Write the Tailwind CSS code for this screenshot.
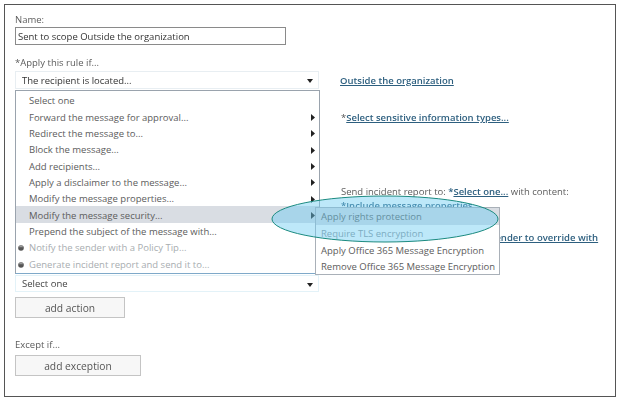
<!DOCTYPE html>
<html>
<head>
<meta charset="utf-8">
<script src="https://cdn.jsdelivr.net/npm/@tailwindcss/browser@4"></script>
</head>
<body class="bg-white w-[621px] h-[404px] overflow-hidden font-['Open_Sans','Noto_Sans',sans-serif] text-[9.5px] text-[#5c5c5c]">
<div class="relative ml-[4px] mt-[4px] w-[612px] h-[393px] border border-[#555]">
  <div class="blur-[0.4px] h-full relative">
  <div class="flex h-full">
    <!-- left column -->
    <div class="w-[315px] pl-[10px] flex flex-col shrink-0">
      <div class="mt-[8px] h-[12px] leading-[14px]">Name:</div>
      <div class="mt-[2px] w-[271px] h-[18px] border border-[#8a8a8a] px-[2px] leading-[18px] text-[#333]">Sent to scope Outside the organization</div>
      <div class="mt-[11px] h-[12px] leading-[14px]">*Apply this rule if...</div>
      <div class="mt-[3px] w-[304px] h-[18px] border border-[#e8eef2] pl-[6px] pr-[4px] pt-[2px] flex items-center justify-between text-[#333]">
        <span>The recipient is located...</span>
        <svg width="7" height="4" viewBox="0 0 7 4"><path d="M0 0h6L3 4z" fill="#222"/></svg>
      </div>
      <div class="h-[186px]"></div>
      <div class="w-[304px] h-[17px] border border-[#e3f2f8] pl-[6px] pr-[4px] pt-[2px] flex items-center justify-between text-[#444]">
        <span>Select one</span>
        <svg width="7" height="4" viewBox="0 0 7 4"><path d="M0 0h6L3 4z" fill="#222"/></svg>
      </div>
      <button class="mt-[5px] w-[110px] h-[21px] border border-[#c4c4c4] bg-[#f7f7f7] pt-[1px] text-[10.25px] text-[#555] leading-[19px] text-center">add action</button>
      <div class="mt-[20px] h-[12px] leading-[14px]">Except if...</div>
      <button class="mt-[5px] w-[126px] h-[21px] border border-[#c4c4c4] bg-[#f7f7f7] pt-[1px] text-[10.25px] text-[#555] leading-[19px] text-center">add exception</button>
    </div>
    <!-- right column -->
    <div class="flex-1 flex flex-col pl-[20px]">
      <a class="mt-[69px] h-[14px] leading-[14px] font-semibold underline text-[#2d5f7f]">Outside the organization</a>
      <div class="mt-[23px] h-[14px] leading-[14px] pl-[1px] font-semibold text-[#2d5f7f]"><span class="font-normal text-[#555]">*</span><span class="underline">Select sensitive information types...</span></div>
      <div class="mt-[60px] h-[14px] leading-[14px] pl-[1px]">Send incident report to: <span class="font-semibold text-[#2d5f7f]">*<span class="underline">Select one...</span></span> with content:</div>
      <div class="h-[14px] leading-[14px] pl-[1px] font-semibold text-[#2d5f7f]">*<span class="underline">Include message properties</span></div>
      <div class="mt-[18px] h-[14px] leading-[14px] pl-[3px] font-semibold text-[#2d5f7f] whitespace-nowrap"><span class="underline">Notify the sender, but allow the sender to override with</span></div>
    </div>
  </div>

  <!-- dropdown menu -->
  <div class="absolute left-[10px] top-[85px] w-[305px] h-[184px] border border-[#9aa3ad] border-b-[#7fa9c9] bg-white flex flex-col py-[1px] text-[#5c5c5c]">
    <div class="h-[16.5px] leading-[18.5px] pl-[13px]">Select one</div>
    <div class="h-[16.5px] pt-[2px] pl-[13px] pr-[4px] flex items-center justify-between"><span>Forward the message for approval...</span><svg width="4" height="7" viewBox="0 0 4 7"><path d="M0 0l4 3.5L0 7z" fill="#222"/></svg></div>
    <div class="h-[16.5px] pt-[2px] pl-[13px] pr-[4px] flex items-center justify-between"><span>Redirect the message to...</span><svg width="4" height="7" viewBox="0 0 4 7"><path d="M0 0l4 3.5L0 7z" fill="#222"/></svg></div>
    <div class="h-[16.5px] pt-[2px] pl-[13px] pr-[4px] flex items-center justify-between"><span>Block the message...</span><svg width="4" height="7" viewBox="0 0 4 7"><path d="M0 0l4 3.5L0 7z" fill="#222"/></svg></div>
    <div class="h-[16.5px] pt-[2px] pl-[13px] pr-[4px] flex items-center justify-between"><span>Add recipients...</span><svg width="4" height="7" viewBox="0 0 4 7"><path d="M0 0l4 3.5L0 7z" fill="#222"/></svg></div>
    <div class="h-[16.5px] pt-[2px] pl-[13px] pr-[4px] flex items-center justify-between"><span>Apply a disclaimer to the message...</span><svg width="4" height="7" viewBox="0 0 4 7"><path d="M0 0l4 3.5L0 7z" fill="#222"/></svg></div>
    <div class="h-[16.5px] pt-[2px] pl-[13px] pr-[4px] flex items-center justify-between"><span>Modify the message properties...</span><svg width="4" height="7" viewBox="0 0 4 7"><path d="M0 0l4 3.5L0 7z" fill="#222"/></svg></div>
    <div class="h-[16.5px] pt-[2px] pl-[13px] pr-[4px] flex items-center justify-between bg-[#d9dde3]"><span>Modify the message security...</span><svg width="4" height="7" viewBox="0 0 4 7"><path d="M0 0l4 3.5L0 7z" fill="#222"/></svg></div>
    <div class="h-[16.5px] leading-[18.5px] pl-[13px]">Prepend the subject of the message with...</div>
    <div class="h-[16.5px] pt-[2px] pl-[2px] flex items-center gap-[5px] text-[#a8adb0]"><svg width="6" height="6" viewBox="0 0 6 6"><circle cx="3" cy="3" r="2.8" fill="#555"/><path d="M1 2.2a2 2 0 0 1 4 0z" fill="#999"/></svg><span>Notify the sender with a Policy Tip...</span></div>
    <div class="h-[16.5px] pt-[2px] pl-[2px] flex items-center gap-[5px] text-[#a8adb0]"><svg width="6" height="6" viewBox="0 0 6 6"><circle cx="3" cy="3" r="2.8" fill="#555"/><path d="M1 2.2a2 2 0 0 1 4 0z" fill="#999"/></svg><span>Generate incident report and send it to...</span></div>
  </div>

  <!-- submenu -->
  <div class="absolute left-[310px] top-[202px] w-[185px] h-[68px] border border-[#a9b0b8] bg-white flex flex-col text-[#5c5c5c] whitespace-nowrap">
    <div class="h-[16.75px] leading-[18.75px] pl-[5px] bg-[#d9dde3]">Apply rights protection</div>
    <div class="h-[16.75px] leading-[18.75px] pl-[5px] text-[#8a9298]">Require TLS encryption</div>
    <div class="h-[16.75px] leading-[18.75px] pl-[5px]">Apply Office 365 Message Encryption</div>
    <div class="h-[16.75px] leading-[18.75px] pl-[5px]">Remove Office 365 Message Encryption</div>
  </div>

  <!-- highlight ellipse -->
  <svg class="absolute left-[265px] top-[189px]" width="232" height="50" viewBox="0 0 232 50">
    <ellipse cx="115" cy="25" rx="113" ry="23" fill="#6dccf2" fill-opacity="0.45" stroke="#1a8a80" stroke-width="1"/>
  </svg>
  </div>
</div>
</body>
</html>
